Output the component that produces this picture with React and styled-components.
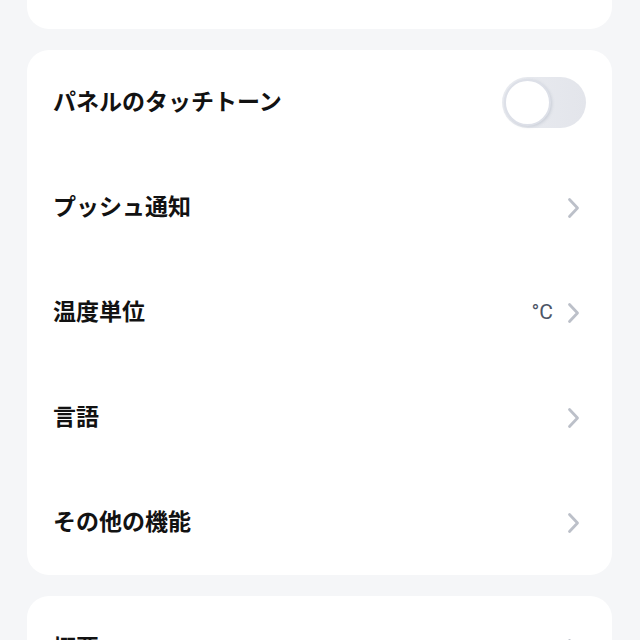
import React, { useState } from 'react';
import styled, { createGlobalStyle } from 'styled-components';

const GlobalStyle = createGlobalStyle`
  html, body {
    margin: 0;
    padding: 0;
    background: #f5f6f8;
  }
  body {
    font-family: "Noto Sans CJK JP", "Noto Sans", sans-serif;
    -webkit-font-smoothing: antialiased;
  }
`

const Page = styled.div`
  width: 640px;
  height: 640px;
  overflow: hidden;
  display: flex;
  flex-direction: column;
  gap: 21px;
  padding: 0 28px 0 27px;
  box-sizing: border-box;
`

const Card = styled.div`
  background: #ffffff;
  border-radius: ${p => (p.$cutTop ? '0 0 22px 22px' : '22px')};
  height: ${p => (p.$cutTop ? '29px' : 'auto')};
  flex-shrink: 0;
  display: flex;
  flex-direction: column;
`

const Row = styled.div`
  height: 105px;
  display: flex;
  align-items: center;
  justify-content: space-between;
  padding: 0 26px;
  box-sizing: border-box;
`

const Label = styled.span`
  font-size: 23px;
  font-weight: 600;
  line-height: 30px;
  padding-bottom: 5px;
  color: #121212;
`

const Right = styled.div`
  display: flex;
  align-items: center;
  gap: 14px;
  margin-right: 6px;
`

const Value = styled.span`
  font-family: "Roboto", "Noto Sans", sans-serif;
  font-size: 21px;
  font-weight: 400;
  line-height: 30px;
  padding-bottom: 2px;
  color: #4d5567;
`

const Track = styled.button`
  width: 84px;
  height: 51px;
  border: none;
  padding: 0;
  border-radius: 26px;
  background: ${p => (p.$on ? '#4a7cf6' : 'linear-gradient(90deg, #e9ebf0, #e3e5eb)')};
  display: flex;
  align-items: center;
  justify-content: ${p => (p.$on ? 'flex-end' : 'flex-start')};
  cursor: pointer;
`

const Knob = styled.span`
  width: 47px;
  height: 47px;
  margin: 0 2px;
  border-radius: 50%;
  background: #ffffff;
  border: 2px solid #dde0e8;
  box-sizing: border-box;
  box-shadow: 1px 1px 3px rgba(120, 130, 150, 0.25);
`

const Chevron = () => (
  <svg width="13" height="22" viewBox="0 0 13 22" fill="none">
    <path d="M2.5 2.5 L10.5 11 L2.5 19.5" stroke="#bcc0c9" strokeWidth="2.8" strokeLinecap="round" strokeLinejoin="round" />
  </svg>
)

const items = [
  { id: 'push', name: 'プッシュ通知' },
  { id: 'temp', name: '温度単位', value: '°C' },
  { id: 'lang', name: '言語' },
  { id: 'more', name: 'その他の機能' },
]

export default function App() {
  const [tone, setTone] = useState(false)

  return (
    <>
      <GlobalStyle />
      <Page>
        <Card $cutTop />
        <Card>
          <Row>
            <Label>パネルのタッチトーン</Label>
            <Track $on={tone} onClick={() => setTone(!tone)} aria-label="toggle">
              <Knob />
            </Track>
          </Row>
          {items.map(item => (
            <Row key={item.id}>
              <Label>{item.name}</Label>
              <Right>
                {item.value && <Value>{item.value}</Value>}
                <Chevron />
              </Right>
            </Row>
          ))}
        </Card>
        <Card>
          <Row>
            <Label>概要</Label>
            <Right>
              <Chevron />
            </Right>
          </Row>
        </Card>
      </Page>
    </>
  )
}
